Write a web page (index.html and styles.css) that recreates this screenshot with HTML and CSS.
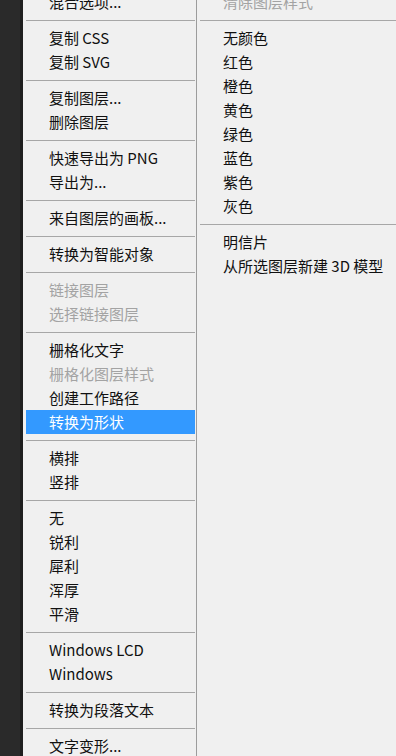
FILE: index.html
```html
<!DOCTYPE html>
<html lang="zh-CN">

<head>
  <meta charset="UTF-8">
  <meta name="viewport" content="width=device-width, initial-scale=1.0">
  <title>文字图层菜单</title>
  <link rel="stylesheet" href="styles.css">
</head>

<body>
  <div class="screen">
    <div class="dock"></div>

    <ul class="menu menu-main">
      <li class="item">混合选项...</li>
      <li class="sep"></li>
      <li class="item">复制 CSS</li>
      <li class="item">复制 SVG</li>
      <li class="sep"></li>
      <li class="item">复制图层...</li>
      <li class="item">删除图层</li>
      <li class="sep"></li>
      <li class="item">快速导出为 PNG</li>
      <li class="item">导出为...</li>
      <li class="sep"></li>
      <li class="item">来自图层的画板...</li>
      <li class="sep"></li>
      <li class="item">转换为智能对象</li>
      <li class="sep"></li>
      <li class="item disabled">链接图层</li>
      <li class="item disabled">选择链接图层</li>
      <li class="sep"></li>
      <li class="item">栅格化文字</li>
      <li class="item disabled">栅格化图层样式</li>
      <li class="item">创建工作路径</li>
      <li class="item active">转换为形状</li>
      <li class="sep"></li>
      <li class="item">横排</li>
      <li class="item">竖排</li>
      <li class="sep"></li>
      <li class="item">无</li>
      <li class="item">锐利</li>
      <li class="item">犀利</li>
      <li class="item">浑厚</li>
      <li class="item">平滑</li>
      <li class="sep"></li>
      <li class="item">Windows LCD</li>
      <li class="item">Windows</li>
      <li class="sep"></li>
      <li class="item">转换为段落文本</li>
      <li class="sep"></li>
      <li class="item">文字变形...</li>
    </ul>

    <ul class="menu menu-sub">
      <li class="item disabled">清除图层样式</li>
      <li class="sep"></li>
      <li class="item">无颜色</li>
      <li class="item">红色</li>
      <li class="item">橙色</li>
      <li class="item">黄色</li>
      <li class="item">绿色</li>
      <li class="item">蓝色</li>
      <li class="item">紫色</li>
      <li class="item">灰色</li>
      <li class="sep"></li>
      <li class="item">明信片</li>
      <li class="item">从所选图层新建 3D 模型</li>
    </ul>
  </div>
</body>

</html>
```

FILE: styles.css
```css
html,
body {
  margin: 0;
  padding: 0;
  height: 100%;
  overflow: hidden;
  background: #f0f0f0;
}

.screen {
  display: flex;
  height: 756px;
  font-family: "Noto Sans CJK SC", "Noto Sans", sans-serif;
  font-size: 15px;
  color: #111;
}

.dock {
  width: 20px;
  flex: none;
  background: #2a2a2a;
  border-right: 3px solid #1f1f1f;
}

.menu {
  list-style: none;
  margin: -10px 0 0;
  padding: 0;
  background: #f0f0f0;
}

.menu-main {
  width: 169px;
  flex: none;
  padding: 0 1px 0 3px;
}

.menu-sub {
  flex: 1;
  border-left: 1px solid #9c9c9c;
  padding-left: 3px;
}

.item {
  height: 24px;
  line-height: 24px;
  white-space: nowrap;
  padding-left: 23px;
}

.item.disabled {
  color: #a3a3a3;
}

.item.active {
  background: #3399ff;
  color: #fff;
}

.sep {
  height: 12px;
  display: flex;
  align-items: center;
}

.sep::before {
  content: '';
  display: block;
  width: 100%;
  height: 1px;
  background: #a7a7a7;
}
```
